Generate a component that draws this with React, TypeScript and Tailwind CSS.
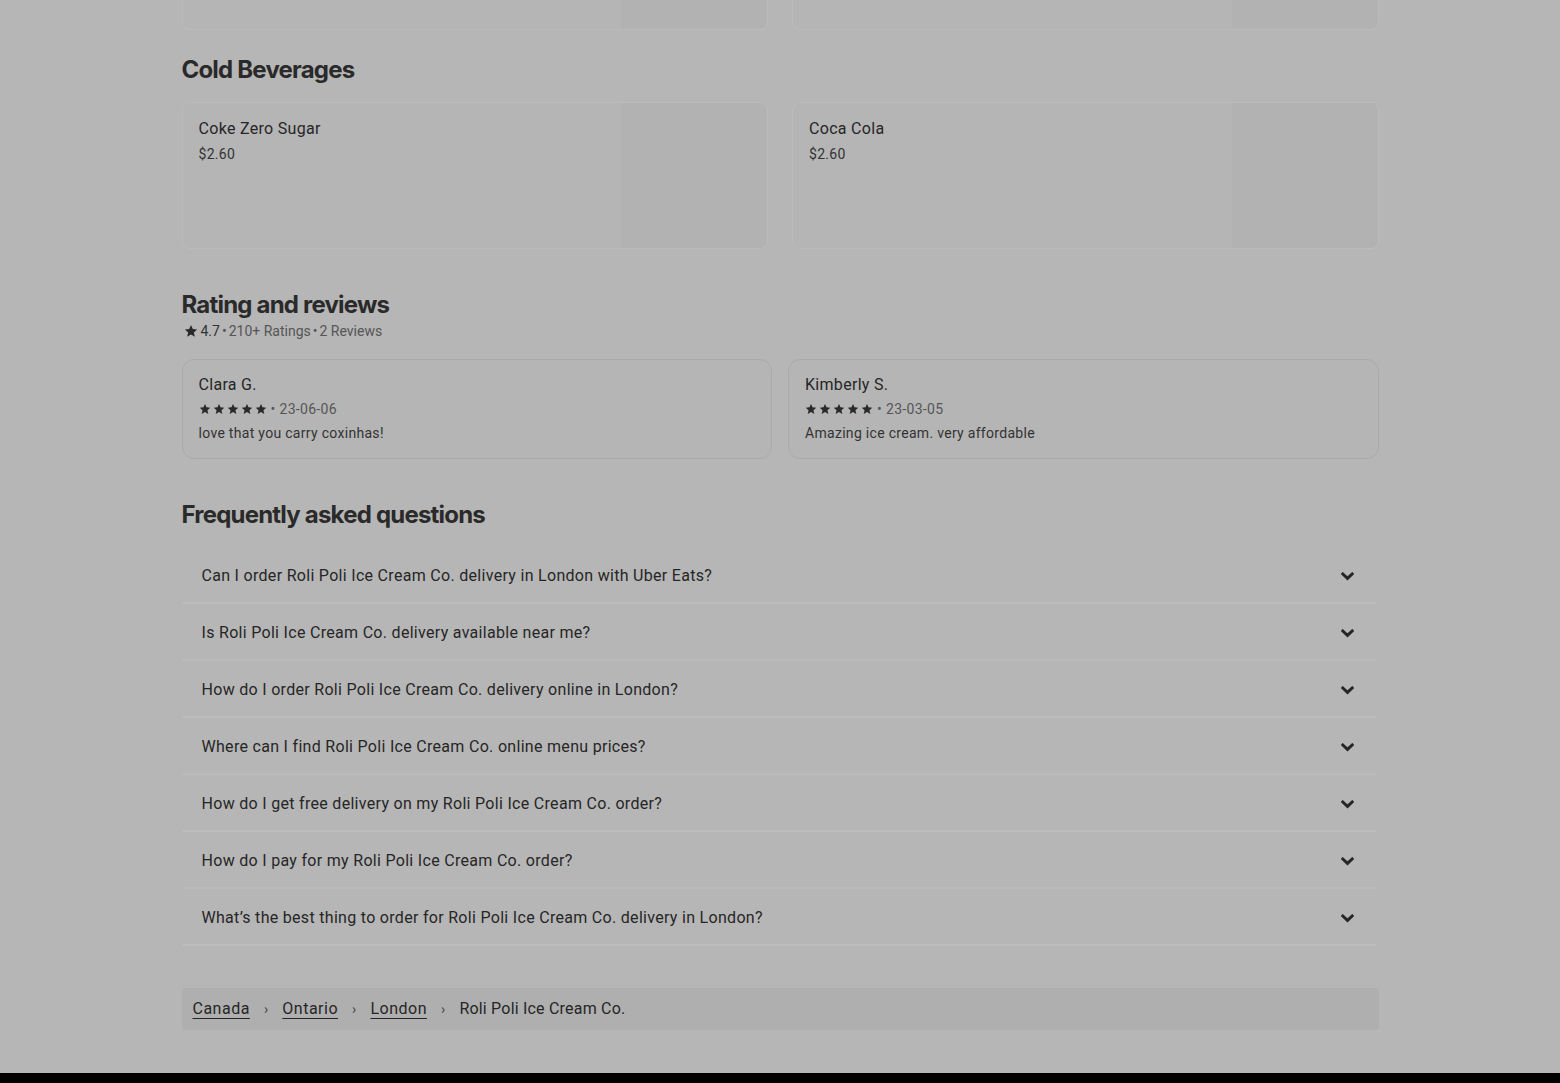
import React from 'react';

const headingFont = { fontFamily: 'Inter, "Noto Sans", sans-serif' };

const faqs = [
  'Can I order Roli Poli Ice Cream Co. delivery in London with Uber Eats?',
  'Is Roli Poli Ice Cream Co. delivery available near me?',
  'How do I order Roli Poli Ice Cream Co. delivery online in London?',
  'Where can I find Roli Poli Ice Cream Co. online menu prices?',
  'How do I get free delivery on my Roli Poli Ice Cream Co. order?',
  'How do I pay for my Roli Poli Ice Cream Co. order?',
  "What\u2019s the best thing to order for Roli Poli Ice Cream Co. delivery in London?",
];

const reviews = [
  { name: 'Clara G.', date: '23-06-06', text: 'love that you carry coxinhas!' },
  { name: 'Kimberly S.', date: '23-03-05', text: 'Amazing ice cream. very affordable' },
];

const Star: React.FC<{ size: number }> = ({ size }) => (
  <svg width={size} height={size} viewBox="0 0 24 24" fill="#2a2a2a">
    <path d="M12 1.8l3.1 6.9 7.4.7-5.6 5 1.7 7.4L12 17.9l-6.6 3.9 1.7-7.4-5.6-5 7.4-.7z" />
  </svg>
);

const Chevron = () => (
  <svg width="13" height="9" viewBox="0 0 13 9" fill="none" className="mt-[2px]">
    <path d="M1.8 2l4.7 4.4 4.7-4.4" stroke="#262626" strokeWidth="3" strokeLinecap="square" />
  </svg>
);

const MenuCard: React.FC<{ name?: string; price?: string; stub?: boolean }> = ({ name, price, stub }) => (
  <div
    className={
      stub
        ? 'flex h-[30px] rounded-b-lg border-x border-b border-[#bbbbbb] bg-[#b5b5b5]'
        : 'flex h-[147px] rounded-lg border border-[#bbbbbb] bg-[#b5b5b5]'
    }
  >
    <div className="flex-1 pl-4 pt-4">
      {name && <div className="text-[16px] leading-5 text-[#262626]">{name}</div>}
      {price && <div className="mt-[5px] text-[14px] leading-5 text-[#333]">{price}</div>}
    </div>
    <div className={stub ? 'w-[146px] rounded-br-lg bg-[#b2b2b2]' : 'w-[146px] rounded-r-lg bg-[#b2b2b2]'} />
  </div>
);

const Crumb: React.FC<{ label: string }> = ({ label }) => (
  <>
    <a className="underline decoration-1 underline-offset-4 tracking-[0.5px]">{label}</a>
    <span className="text-[14px] text-[#444]">›</span>
  </>
);

export default function App() {
  return (
    <div
      className="min-h-screen bg-[#b6b6b6] tracking-[0.3px]"
      style={{ fontFamily: 'Roboto, "Liberation Sans", sans-serif' }}
    >
      <div className="mx-auto w-[1197px]">
        <div className="grid grid-cols-2 gap-6">
          <MenuCard stub />
          <MenuCard stub />
        </div>

        <h2 className="mt-6 h-8 text-[24px] font-bold leading-8 tracking-[-0.8px] text-[#2a2a2a]" style={headingFont}>
          Cold Beverages
        </h2>
        <div className="mt-4 grid grid-cols-2 gap-6">
          <MenuCard name="Coke Zero Sugar" price="$2.60" />
          <MenuCard name="Coca Cola" price="$2.60" />
        </div>

        <h2 className="mt-10 h-8 text-[24px] font-bold leading-8 tracking-[-0.8px] text-[#2a2a2a]" style={headingFont}>
          Rating and reviews
        </h2>
        <div className="flex h-5 items-center gap-[2px] pl-[2px] text-[14px] leading-5 tracking-normal text-[#555]">
          <Star size={14} />
          <span className="ml-[1px] text-[#333]">4.7</span>
          <span>•</span>
          <span>210+ Ratings</span>
          <span>•</span>
          <span>2 Reviews</span>
        </div>
        <div className="mt-[18px] grid grid-cols-2 gap-4">
          {reviews.map(r => (
            <div key={r.name} className="h-[100px] rounded-xl border border-[#aaaaaa] bg-[#b5b5b5] px-4 pt-[15px]">
              <div className="text-[16px] leading-5 text-[#262626]">{r.name}</div>
              <div className="mt-1 flex h-5 items-center gap-[2px] text-[14px] text-[#555]">
                {[0, 1, 2, 3, 4].map(i => (
                  <Star key={i} size={12} />
                ))}
                <span className="ml-[2px]">•</span>
                <span className="ml-[2px]">{r.date}</span>
              </div>
              <div className="mt-1 text-[14px] leading-5 text-[#333]">{r.text}</div>
            </div>
          ))}
        </div>

        <h2 className="mt-10 h-8 text-[24px] font-bold leading-8 tracking-[-0.8px] text-[#2a2a2a]" style={headingFont}>
          Frequently asked questions
        </h2>
        <div className="mt-4 w-[1194px]">
          {faqs.map(q => (
            <div
              key={q}
              className="flex h-[57px] items-center justify-between border-b-2 border-[#bbbbbb] pl-5 pr-[22px] pt-[2px]"
            >
              <span className="text-[16px] text-[#262626]">{q}</span>
              <Chevron />
            </div>
          ))}
        </div>

        <nav className="mt-[42px] flex h-[42px] items-center gap-[14px] rounded bg-[#afafaf] pl-[11px] text-[16px] tracking-[0.2px] text-[#262626]">
          <Crumb label="Canada" />
          <Crumb label="Ontario" />
          <Crumb label="London" />
          <span>Roli Poli Ice Cream Co.</span>
        </nav>
      </div>
      <div className="mt-[43px] h-[10px] bg-black" />
    </div>
  );
}
